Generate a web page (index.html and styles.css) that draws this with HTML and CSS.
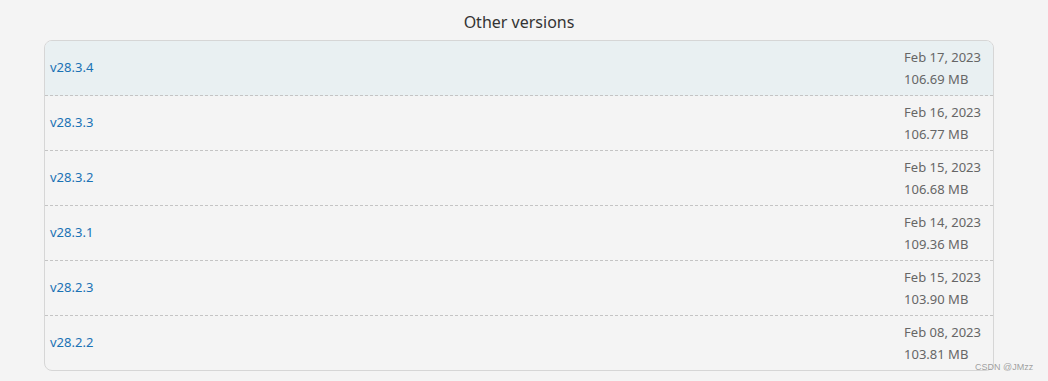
FILE: index.html
```html
<!DOCTYPE html>
<html>
<head>
<meta charset="utf-8">
<link rel="stylesheet" href="styles.css">
</head>
<body>
<div class="page">
  <h2 class="title">Other versions</h2>
  <div class="list">
    <div class="row current"><a class="ver" href="#">v28.3.4</a><div class="meta"><div>Feb 17, 2023</div><div>106.69 MB</div></div></div>
    <div class="row"><a class="ver" href="#">v28.3.3</a><div class="meta"><div>Feb 16, 2023</div><div>106.77 MB</div></div></div>
    <div class="row"><a class="ver" href="#">v28.3.2</a><div class="meta"><div>Feb 15, 2023</div><div>106.68 MB</div></div></div>
    <div class="row"><a class="ver" href="#">v28.3.1</a><div class="meta"><div>Feb 14, 2023</div><div>109.36 MB</div></div></div>
    <div class="row"><a class="ver" href="#">v28.2.3</a><div class="meta"><div>Feb 15, 2023</div><div>103.90 MB</div></div></div>
    <div class="row"><a class="ver" href="#">v28.2.2</a><div class="meta"><div>Feb 08, 2023</div><div>103.81 MB</div></div></div>
  </div>
</div>
<div class="watermark">CSDN @JMzz</div>
</body>
</html>
```
FILE: styles.css
```css
html, body {
  margin: 0;
  padding: 0;
  background: #f4f4f4;
  font-family: "Noto Sans", "Open Sans", sans-serif;
}
.page {
  width: 950px;
  margin-left: 44px;
  padding-top: 12px;
}
.title {
  margin: 0 0 7px;
  text-align: center;
  font-weight: 400;
  font-size: 16px;
  line-height: 21px;
  color: #333;
}
.list {
  border: 1px solid #d6d6d6;
  border-radius: 8px;
  overflow: hidden;
}
.row {
  display: flex;
  justify-content: space-between;
  align-items: center;
  height: 54px;
  padding: 0 12px 0 5px;
  border-bottom: 1px dashed #c4c4c4;
}
.row:last-child {
  border-bottom: none;
}
.row.current {
  background: #e9f0f2;
}
.ver {
  color: #1a72b5;
  text-decoration: none;
  font-size: 13px;
  margin-bottom: 2px;
}
.meta {
  text-align: left;
  font-size: 13px;
  line-height: 22px;
  color: #666;
}
.watermark {
  position: absolute;
  left: 975px;
  top: 362px;
  font-family: "Liberation Sans", sans-serif;
  font-size: 9px;
  color: rgba(130, 130, 130, 0.75);
}
```
